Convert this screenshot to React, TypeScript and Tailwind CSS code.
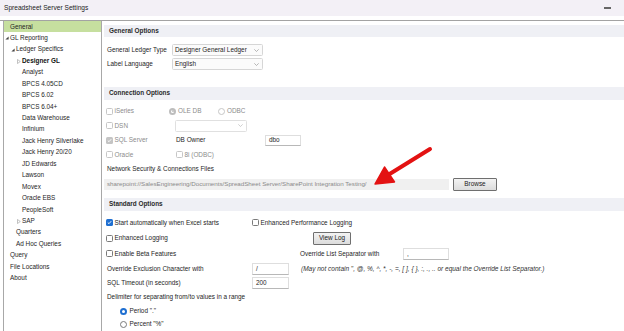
import React from 'react'

type Node = { label: string; level: number; arrow?: 'open' | 'closed'; bold?: boolean; selected?: boolean }

const tree: Node[] = [
  { label: 'General', level: 0, selected: true },
  { label: 'GL Reporting', level: 0, arrow: 'open' },
  { label: 'Ledger Specifics', level: 1, arrow: 'open' },
  { label: 'Designer GL', level: 2, arrow: 'closed', bold: true },
  { label: 'Analyst', level: 2 },
  { label: 'BPCS 4.05CD', level: 2 },
  { label: 'BPCS 6.02', level: 2 },
  { label: 'BPCS 6.04+', level: 2 },
  { label: 'Data Warehouse', level: 2 },
  { label: 'Infinium', level: 2 },
  { label: 'Jack Henry Silverlake', level: 2 },
  { label: 'Jack Henry 20/20', level: 2 },
  { label: 'JD Edwards', level: 2 },
  { label: 'Lawson', level: 2 },
  { label: 'Movex', level: 2 },
  { label: 'Oracle EBS', level: 2 },
  { label: 'PeopleSoft', level: 2 },
  { label: 'SAP', level: 2, arrow: 'closed' },
  { label: 'Quarters', level: 1 },
  { label: 'Ad Hoc Queries', level: 1 },
  { label: 'Query', level: 0 },
  { label: 'File Locations', level: 0 },
  { label: 'About', level: 0 },
]

const indent = ['pl-0', 'pl-[6px]', 'pl-[12px]']

function Tick({ color = '#fff' }: { color?: string }) {
  return (
    <svg width="5" height="5" viewBox="0 0 5 5">
      <path d="M0.8 2.6 L2 3.7 L4.2 1.2" fill="none" stroke={color} strokeWidth="0.9" />
    </svg>
  )
}

function Check({ state = 'off', disabled }: { state?: 'off' | 'blue' | 'gray'; disabled?: boolean }) {
  if (state === 'blue')
    return (
      <span className="w-[7px] h-[7px] rounded-[1.5px] bg-[#1f6fd1] flex items-center justify-center shrink-0">
        <Tick />
      </span>
    )
  if (state === 'gray')
    return (
      <span className="w-[7px] h-[7px] rounded-[1.5px] bg-[#c4c4c4] flex items-center justify-center shrink-0">
        <Tick />
      </span>
    )
  return (
    <span
      className={`w-[7px] h-[7px] rounded-[1.5px] border bg-white shrink-0 ${
        disabled ? 'border-[#c6c6c6]' : 'border-[#7a7a7a]'
      }`}
    />
  )
}

function Radio({ on, disabled }: { on?: boolean; disabled?: boolean }) {
  if (on && disabled)
    return (
      <span className="w-[7px] h-[7px] rounded-full border-[2px] border-[#bdbdbd] bg-white shrink-0 flex items-center justify-center">
        <span className="w-[2px] h-[2px] rounded-full bg-[#bdbdbd]" />
      </span>
    )
  if (on) return <span className="w-[7px] h-[7px] rounded-full border-[2.2px] border-[#1f6fd1] bg-white shrink-0" />
  return (
    <span
      className={`w-[7px] h-[7px] rounded-full border bg-white shrink-0 ${
        disabled ? 'border-[#c6c6c6]' : 'border-[#7a7a7a]'
      }`}
    />
  )
}

function Select({ value, w = 'w-[91px]' }: { value: string; w?: string }) {
  return (
    <div className={`${w} h-[12.5px] border border-[#d6d6d6] rounded-[1.5px] bg-[#fbfbfb] flex items-center justify-between pl-[2px] pr-[3px]`}>
      <span>{value}</span>
      <svg width="5" height="3" viewBox="0 0 5 3">
        <path d="M0.3 0.3 L2.5 2.5 L4.7 0.3" fill="none" stroke="#8a8a8a" strokeWidth="0.6" />
      </svg>
    </div>
  )
}

function Input({ value, w }: { value: string; w: string }) {
  return (
    <div className={`${w} h-[11.5px] border border-[#dedede] border-b-[#b8b8b8] bg-white flex items-center pl-[3px]`}>
      {value}
    </div>
  )
}

function Button({ label, w }: { label: string; w: string }) {
  return (
    <div
      className={`${w} h-[12.5px] border border-[#6f6f6f] rounded-[1px] bg-gradient-to-b from-[#f3f3f3] to-[#dcdcdc] flex items-center justify-center text-[#1a1a1a]`}
    >
      {label}
    </div>
  )
}

function Header({ title, h = 'h-[13px]', mt }: { title: string; h?: string; mt: string }) {
  return (
    <div className={`${mt} ${h} ml-[2px] bg-[#eff0f5] flex items-center pl-[5px] font-bold text-[#2a2a2a]`}>
      {title}
    </div>
  )
}

export default function App() {
  return (
    <div className="w-[624px] h-[331px] overflow-hidden bg-white relative flex flex-col font-['Liberation_Sans',Arial,sans-serif] text-[6.4px] text-[#1e1e1e] leading-none">
      {/* Title bar */}
      <div className="h-[16px] shrink-0 bg-[#f3f0f6] flex items-center justify-between pl-[4px]">
        <span className="text-[6.6px] text-[#222]">Spreadsheet Server Settings</span>
        <span className="w-[7px] h-[1.2px] bg-[#666] mr-[13px]" />
      </div>
      <div className="h-[4px] shrink-0" />
      <div className="h-px shrink-0 bg-[#a3a3a3]" />

      <div className="flex flex-1 min-h-0">
        {/* Tree */}
        <div className="ml-[3px] w-[99px] shrink-0 border-l border-r border-[#a8a8a8]">
          {tree.map((n) => (
            <div key={n.label} className={`h-[11.44px] flex items-center ${indent[n.level]} ${n.selected ? 'bg-[#c6df9f]' : ''}`}>
              <span className="w-[6px] h-full flex items-center justify-start pl-[1px] shrink-0">
                {n.arrow === 'open' && (
                  <svg width="4" height="4" viewBox="0 0 4 4">
                    <path d="M3.6 0.4 L3.6 3.6 L0.4 3.6 Z" fill="#444" />
                  </svg>
                )}
                {n.arrow === 'closed' && (
                  <svg width="4" height="5" viewBox="0 0 4 5">
                    <path d="M0.5 0.5 L3.3 2.5 L0.5 4.5 Z" fill="none" stroke="#999" strokeWidth="0.6" />
                  </svg>
                )}
              </span>
              <span className={n.bold ? 'font-bold text-[#111]' : ''}>{n.label}</span>
            </div>
          ))}
        </div>

        {/* Settings */}
        <div className="flex-1 flex flex-col min-w-0">
          <Header title="General Options" h="h-[12px]" mt="mt-[4px]" />
          <div className="mt-[7px] h-[12px] flex items-center pl-[5px]">
            <span className="w-[65px]">General Ledger Type</span>
            <Select value="Designer General Ledger" />
          </div>
          <div className="mt-[2px] h-[12px] flex items-center pl-[5px]">
            <span className="w-[65px]">Label Language</span>
            <Select value="English" />
          </div>

          <Header title="Connection Options" mt="mt-[17px]" />
          <div className="mt-[4px] h-[14.5px] flex items-center pl-[4px] text-[#8c8c8c]">
            <span className="w-[63px] flex items-center gap-[1.5px]">
              <Check disabled />
              iSeries
            </span>
            <span className="w-[49px] flex items-center gap-[2px]">
              <Radio on disabled />
              OLE DB
            </span>
            <span className="flex items-center gap-[2px]">
              <Radio disabled />
              ODBC
            </span>
          </div>
          <div className="h-[14.5px] flex items-center pl-[4px] text-[#8c8c8c]">
            <span className="w-[69px] flex items-center gap-[1.5px]">
              <Check disabled />
              DSN
            </span>
            <div className="w-[72px] h-[12px] border border-[#e0e0e0] rounded-[1.5px] bg-white flex items-center justify-end pr-[3px]">
              <svg width="5" height="3" viewBox="0 0 5 3">
                <path d="M0.3 0.3 L2.5 2.5 L4.7 0.3" fill="none" stroke="#b0b0b0" strokeWidth="0.6" />
              </svg>
            </div>
          </div>
          <div className="h-[14.5px] flex items-center pl-[4px]">
            <span className="w-[70px] flex items-center gap-[1.5px] text-[#8c8c8c]">
              <Check state="gray" />
              SQL Server
            </span>
            <span className="w-[89px]">DB Owner</span>
            <Input value="dbo" w="w-[36px]" />
          </div>
          <div className="h-[14.5px] flex items-center pl-[4px] text-[#8c8c8c]">
            <span className="w-[70px] flex items-center gap-[1.5px]">
              <Check disabled />
              Oracle
            </span>
            <span className="flex items-center gap-[1.5px]">
              <Check disabled />
              8i (ODBC)
            </span>
          </div>
          <div className="h-[14px] flex items-center pl-[5px]">Network Security &amp; Connections Files</div>
          <div className="mt-[2px] h-[13px] flex items-center pl-[2px]">
            <div className="w-[345px] h-[11.5px] bg-[#f0f0f0] flex items-center pl-[3px] text-[6.2px] text-[#8a8a8a]">
              sharepoint://SalesEngineering/Documents/SpreadSheet Server/SharePoint Integration Testing/
            </div>
            <div className="ml-[4px]">
              <Button label="Browse" w="w-[44px]" />
            </div>
          </div>

          <Header title="Standard Options" mt="mt-[7px]" />
          <div className="mt-[4px] h-[15.5px] flex items-center pl-[4px]">
            <span className="w-[146px] flex items-center gap-[1.5px]">
              <Check state="blue" />
              Start automatically when Excel starts
            </span>
            <span className="flex items-center gap-[1.5px]">
              <Check />
              Enhanced Performance Logging
            </span>
          </div>
          <div className="h-[15.5px] flex items-center pl-[4px]">
            <span className="w-[207px] flex items-center gap-[1.5px]">
              <Check />
              Enhanced Logging
            </span>
            <Button label="View Log" w="w-[38px]" />
          </div>
          <div className="h-[15.5px] flex items-center pl-[4px]">
            <span className="w-[194px] flex items-center gap-[1.5px]">
              <Check />
              Enable Beta Features
            </span>
            <span className="w-[103px]">Override List Separator with</span>
            <Input value="," w="w-[46px]" />
          </div>
          <div className="h-[14.5px] flex items-center pl-[5px]">
            <span className="w-[145px]">Override Exclusion Character with</span>
            <Input value="/" w="w-[37px]" />
            <span className="ml-[12px] italic text-[6.5px] text-[#333]">
              (May not contain ", @, %, ^, *, -, =, [ ], {'{ }'}, :, ., .. or equal the Override List Separator.)
            </span>
          </div>
          <div className="h-[13.5px] flex items-center pl-[5px]">
            <span className="w-[145px]">SQL Timeout (in seconds)</span>
            <Input value="200" w="w-[37px]" />
          </div>
          <div className="h-[14.5px] flex items-center pl-[5px]">Delimiter for separating from/to values in a range</div>
          <div className="h-[14.5px] flex items-center pl-[18px] gap-[2.5px]">
            <Radio on />
            Period "."
          </div>
          <div className="h-[12px] flex items-center pl-[18px] gap-[2.5px]">
            <Radio />
            Percent "%"
          </div>
        </div>
      </div>

      {/* Red annotation arrow */}
      <svg className="absolute left-0 top-0 pointer-events-none" width="624" height="331" viewBox="0 0 624 331">
        <path d="M430 149 L388 175" stroke="#e31212" strokeWidth="4" strokeLinecap="round" fill="none" />
        <path d="M375 184 L384.5 167 L394.5 182 Z" fill="#e31212" stroke="#e31212" strokeWidth="1.5" strokeLinejoin="round" />
      </svg>
    </div>
  )
}
